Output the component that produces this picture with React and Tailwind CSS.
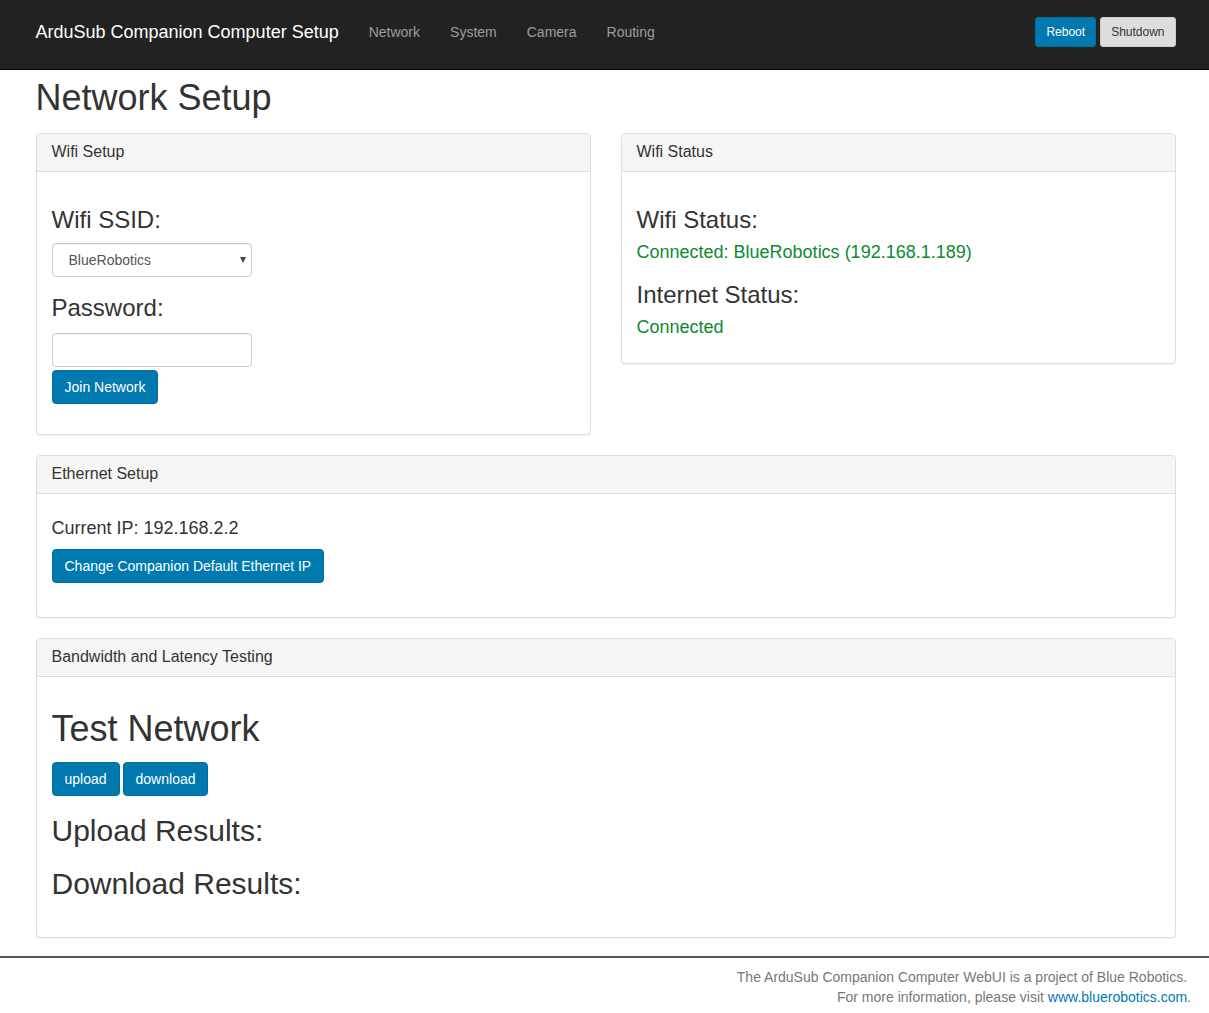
import { useState } from "react";

function Panel({ title, children, bodyClass = "" }) {
  return (
    <div className="mb-[20px] rounded-[4px] border border-[#ddd] bg-white shadow-[0_1px_1px_rgba(0,0,0,0.05)]">
      <div className="rounded-t-[3px] border-b border-[#ddd] bg-[#f5f5f5] px-[15px] pt-[9px] pb-[11px] text-[16px] leading-[17px] text-[#333]">
        {title}
      </div>
      <div className={"px-[15px] pt-[15px] " + bodyClass}>{children}</div>
    </div>
  );
}

function Btn({ children }) {
  return (
    <button
      type="button"
      className="inline-block h-[34px] rounded-[4px] border border-[#006d9e] bg-[#0079b0] px-[12px] text-[14px] leading-[20px] text-white"
    >
      {children}
    </button>
  );
}

const h3 = "mt-[20px] mb-[10px] text-[24px] leading-[26.4px] font-normal";
const h4 = "mt-[10px] mb-[10px] text-[18px] leading-[19.8px] font-normal";
const h2 = "mt-[18px] mb-[10px] text-[30px] leading-[33px] font-normal";
const field =
  "block h-[34px] w-[200px] rounded-[4px] border border-[#ccc] bg-white shadow-[inset_0_1px_1px_rgba(0,0,0,0.075)]";

export default function App() {
  const [ssid, setSsid] = useState("BlueRobotics");
  const [pw, setPw] = useState("");

  return (
    <div className="min-h-screen bg-white font-['Liberation_Sans',Arial,sans-serif] text-[14px] leading-[20px] text-[#333]">
      {/* navbar */}
      <nav className="h-[70px] border-b border-[#080808] bg-[#222] pb-[5px]">
        <div className="mx-auto flex h-full w-[1170px] items-center pl-[16px] pr-[14px]">
          <span className="text-[18px] leading-[20px] text-white">ArduSub Companion Computer Setup</span>
          <ul className="ml-[15px] flex">
            {["Network", "System", "Camera", "Routing"].map((l) => (
              <li key={l} className="px-[15px] text-[14px] leading-[20px] text-[#9d9d9d]">
                {l}
              </li>
            ))}
          </ul>
          <div className="ml-auto flex gap-[4px]">
            <button
              type="button"
              className="h-[30px] rounded-[3px] border border-[#006d9e] bg-[#0079b0] px-[10px] text-[12px] leading-[18px] text-white"
            >
              Reboot
            </button>
            <button
              type="button"
              className="h-[30px] rounded-[3px] border border-[#ccc] bg-[#ddd] px-[10px] text-[12px] leading-[18px] text-[#333]"
            >
              Shutdown
            </button>
          </div>
        </div>
      </nav>

      <div className="mx-auto w-[1170px] pl-[16px] pr-[14px]">
        <h1 className="mt-[8px] mb-[15px] text-[36px] leading-[39.6px] font-normal">Network Setup</h1>

        <div className="grid grid-cols-2 items-start gap-[30px]">
          <Panel title="Wifi Setup" bodyClass="pb-[30px]">
            <h3 className={h3}>Wifi SSID:</h3>
            <div className="relative w-[200px]">
              <select
                value={ssid}
                onChange={(e) => setSsid(e.target.value)}
                className={field + " appearance-none pl-[16px] text-[14px] text-[#555] outline-none"}
              >
                <option>BlueRobotics</option>
              </select>
              <span className="pointer-events-none absolute right-[6px] top-[14px] h-0 w-0 border-x-[3.5px] border-t-[6px] border-x-transparent border-t-[#444]" />
            </div>
            <h3 className="mt-[18px] mb-[12px] text-[24px] leading-[26.4px] font-normal">Password:</h3>
            <input
              type="password"
              value={pw}
              onChange={(e) => setPw(e.target.value)}
              className={field + " px-[12px] outline-none"}
            />
            <div className="mt-[3px]">
              <Btn>Join Network</Btn>
            </div>
          </Panel>

          <Panel title="Wifi Status" bodyClass="pb-[15px]">
            <h3 className={h3}>Wifi Status:</h3>
            <h4 className={h4 + " text-[#0b8a2f]"}>Connected: BlueRobotics (192.168.1.189)</h4>
            <h3 className="mt-[19px] mb-[10px] text-[24px] leading-[26.4px] font-normal">Internet Status:</h3>
            <h4 className={h4 + " text-[#0b8a2f]"}>Connected</h4>
          </Panel>
        </div>

        <Panel title="Ethernet Setup" bodyClass="pb-[34px]">
          <h4 className={h4}>Current IP: 192.168.2.2</h4>
          <Btn>Change Companion Default Ethernet IP</Btn>
        </Panel>

        <Panel title="Bandwidth and Latency Testing" bodyClass="pb-[27px]">
          <h1 className="mt-[17px] mb-[13px] text-[36px] leading-[39.6px] font-normal">Test Network</h1>
          <div className="flex gap-[3px]">
            <Btn>upload</Btn>
            <Btn>download</Btn>
          </div>
          <h2 className={h2}>Upload Results:</h2>
          <h2 className="mt-[20px] mb-[10px] text-[30px] leading-[33px] font-normal">Download Results:</h2>
        </Panel>
      </div>

      <footer className="mt-[-2px] border-t-2 border-[#555] pt-[9px]">
        <div className="ml-auto mr-[18px] w-[1170px] text-right text-[14px] leading-[20px] text-[#777]">
          The ArduSub Companion Computer WebUI is a project of Blue Robotics.{"\u00a0"}
          <br />
          For more information, please visit <span className="text-[#0079b0]">www.bluerobotics.com</span>.
        </div>
      </footer>
    </div>
  );
}
